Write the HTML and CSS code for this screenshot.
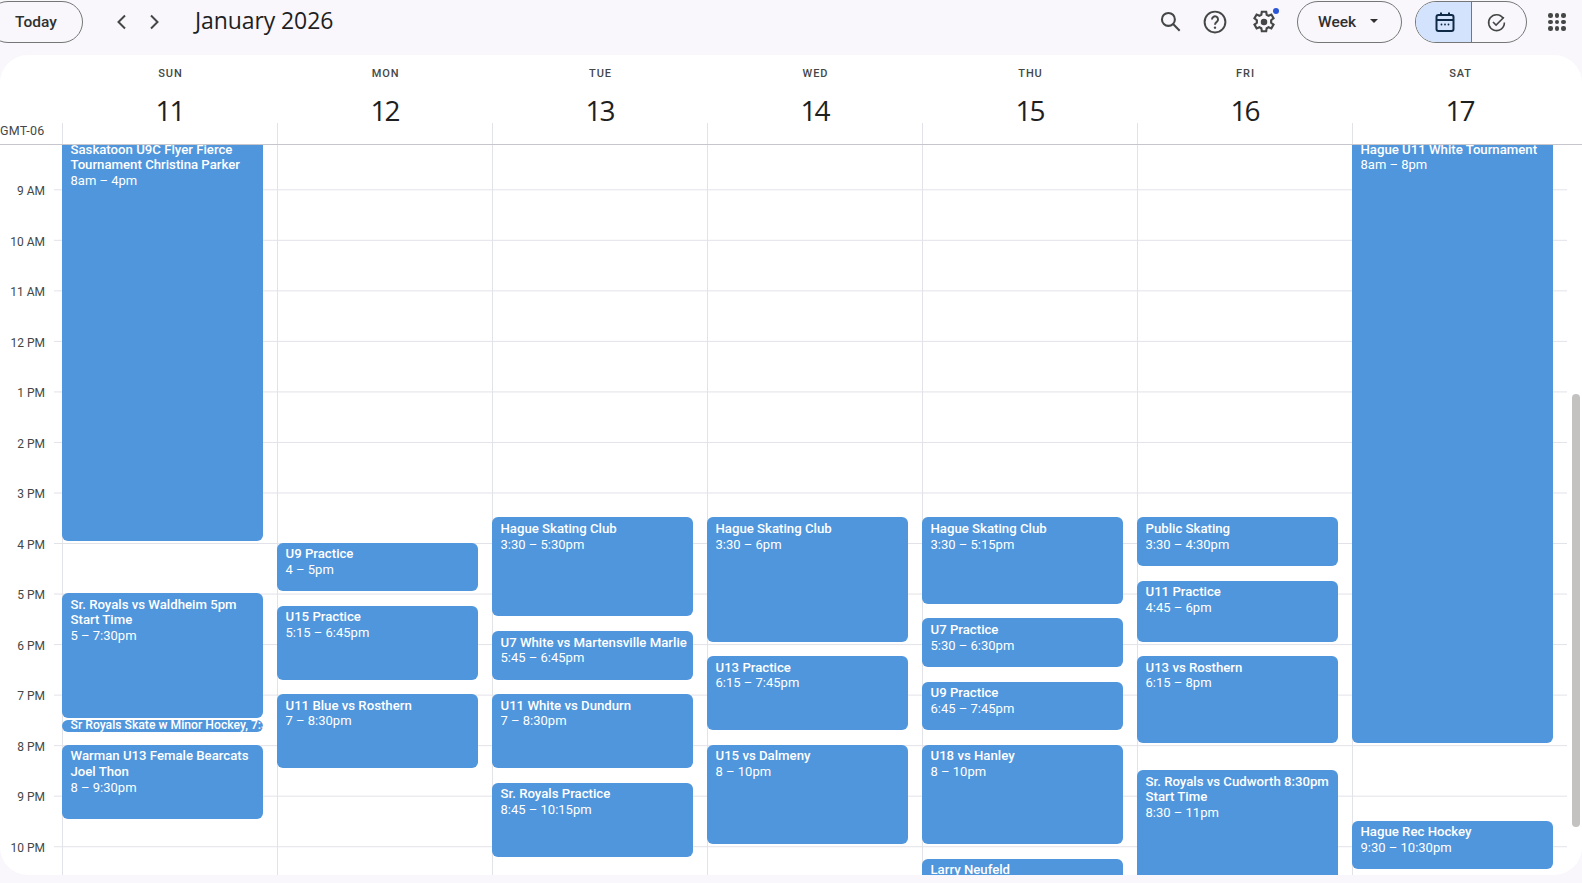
FILE: index.html
```html
<!DOCTYPE html>
<html lang="en">
<head>
<meta charset="UTF-8" />
<title>Calendar - Week of January 11, 2026</title>
<link rel="stylesheet" href="styles.css">
</head>
<body>

<header class="topbar">
  <button class="pill today">Today</button>
  <div class="nav">
    <svg class="nav-icon" viewBox="0 0 24 24"><path d="M15 5.5 8.5 12l6.5 6.5"/></svg>
    <svg class="nav-icon" viewBox="0 0 24 24"><path d="M9 5.5l6.5 6.5L9 18.5"/></svg>
  </div>
  <h1 class="month">January 2026</h1>

  <div class="tools">
    <svg class="tool search" viewBox="0 0 24 24"><circle cx="10" cy="10" r="6.2"/><path d="M14.5 14.5 20.8 20.8"/></svg>
    <svg class="tool help" viewBox="0 0 24 24"><circle cx="12" cy="12" r="9.6"/><path d="M9.2 9.6a2.8 2.8 0 1 1 4.4 2.3c-1 .7-1.6 1.2-1.6 2.6"/><circle class="dot" cx="12" cy="17.2" r="1.1"/></svg>
    <div class="settings">
      <svg class="tool gear" viewBox="0 0 24 24"><path d="M10 2.5h4l.5 2.8 1.7.9 2.6-1.1 2 3.5-2.2 1.7v2.4l2.2 1.7-2 3.5-2.6-1.1-1.7.9-.5 2.8h-4l-.5-2.8-1.7-.9-2.6 1.1-2-3.5 2.2-1.7v-2.4L3.2 8.6l2-3.5 2.6 1.1 1.7-.9z"/><circle class="dot" cx="12" cy="12" r="3"/></svg>
      <span class="badge"></span>
    </div>
    <button class="pill week">Week<span class="caret"></span></button>
    <div class="switch">
      <div class="switch-part active">
        <svg class="tool cal" viewBox="0 0 24 24"><rect x="3.5" y="5" width="17" height="16" rx="2"/><path d="M3.5 10h17M8 2.5V6M16 2.5V6"/><circle class="dot" cx="8.5" cy="14.5" r=".9"/><circle class="dot" cx="12" cy="14.5" r=".9"/><circle class="dot" cx="15.5" cy="14.5" r=".9"/></svg>
      </div>
      <div class="switch-part">
        <svg class="tool check" viewBox="0 0 24 24"><path d="M19.6 7.4A9 9 0 1 0 21 12"/><path d="M8 11.5l3.5 3.5L20.5 6"/></svg>
      </div>
    </div>
    <div class="apps">
      <i></i><i></i><i></i><i></i><i></i><i></i><i></i><i></i><i></i>
    </div>
  </div>
</header>

<main class="card">
  <div class="day-heads">
    <div class="day-head"><span class="dow">SUN</span><span class="dom">11</span></div>
    <div class="day-head"><span class="dow">MON</span><span class="dom">12</span></div>
    <div class="day-head"><span class="dow">TUE</span><span class="dom">13</span></div>
    <div class="day-head"><span class="dow">WED</span><span class="dom">14</span></div>
    <div class="day-head"><span class="dow">THU</span><span class="dom">15</span></div>
    <div class="day-head"><span class="dow">FRI</span><span class="dom">16</span></div>
    <div class="day-head"><span class="dow">SAT</span><span class="dom">17</span></div>
  </div>

  <div class="allday">
    <div class="tz">GMT-06</div>
    <div class="allday-cell"></div><div class="allday-cell"></div><div class="allday-cell"></div>
    <div class="allday-cell"></div><div class="allday-cell"></div><div class="allday-cell"></div>
    <div class="allday-cell"></div>
  </div>

  <div class="grid">
    <div class="hours">
      <div class="hour">9 AM</div>
      <div class="hour">10 AM</div>
      <div class="hour">11 AM</div>
      <div class="hour">12 PM</div>
      <div class="hour">1 PM</div>
      <div class="hour">2 PM</div>
      <div class="hour">3 PM</div>
      <div class="hour">4 PM</div>
      <div class="hour">5 PM</div>
      <div class="hour">6 PM</div>
      <div class="hour">7 PM</div>
      <div class="hour">8 PM</div>
      <div class="hour">9 PM</div>
      <div class="hour">10 PM</div>
    </div>

    <div class="day">
      <div class="event" style="--start:8;--len:8"><b>Saskatoon U9C Flyer Fierce Tournament Christina Parker</b><span>8am – 4pm</span></div>
      <div class="event" style="--start:17;--len:2.5"><b>Sr. Royals vs Waldheim 5pm Start Time</b><span>5 – 7:30pm</span></div>
      <div class="event tiny" style="--start:19.5;--len:0.28"><b>Sr Royals Skate w Minor Hockey, 7:30pm</b></div>
      <div class="event" style="--start:20;--len:1.5"><b>Warman U13 Female Bearcats Joel Thon</b><span>8 – 9:30pm</span></div>
    </div>

    <div class="day">
      <div class="event" style="--start:16;--len:1"><b>U9 Practice</b><span>4 – 5pm</span></div>
      <div class="event" style="--start:17.25;--len:1.5"><b>U15 Practice</b><span>5:15 – 6:45pm</span></div>
      <div class="event" style="--start:19;--len:1.5"><b>U11 Blue vs Rosthern</b><span>7 – 8:30pm</span></div>
    </div>

    <div class="day">
      <div class="event" style="--start:15.5;--len:2"><b>Hague Skating Club</b><span>3:30 – 5:30pm</span></div>
      <div class="event" style="--start:17.75;--len:1"><b class="clip">U7 White vs Martensville Marlie Peters</b><span>5:45 – 6:45pm</span></div>
      <div class="event" style="--start:19;--len:1.5"><b>U11 White vs Dundurn</b><span>7 – 8:30pm</span></div>
      <div class="event" style="--start:20.75;--len:1.5"><b>Sr. Royals Practice</b><span>8:45 – 10:15pm</span></div>
    </div>

    <div class="day">
      <div class="event" style="--start:15.5;--len:2.5"><b>Hague Skating Club</b><span>3:30 – 6pm</span></div>
      <div class="event" style="--start:18.25;--len:1.5"><b>U13 Practice</b><span>6:15 – 7:45pm</span></div>
      <div class="event" style="--start:20;--len:2"><b>U15 vs Dalmeny</b><span>8 – 10pm</span></div>
    </div>

    <div class="day">
      <div class="event" style="--start:15.5;--len:1.75"><b>Hague Skating Club</b><span>3:30 – 5:15pm</span></div>
      <div class="event" style="--start:17.5;--len:1"><b>U7 Practice</b><span>5:30 – 6:30pm</span></div>
      <div class="event" style="--start:18.75;--len:1"><b>U9 Practice</b><span>6:45 – 7:45pm</span></div>
      <div class="event" style="--start:20;--len:2"><b>U18 vs Hanley</b><span>8 – 10pm</span></div>
      <div class="event" style="--start:22.25;--len:1"><b>Larry Neufeld</b><span>10:15 – 11:15pm</span></div>
    </div>

    <div class="day">
      <div class="event" style="--start:15.5;--len:1"><b>Public Skating</b><span>3:30 – 4:30pm</span></div>
      <div class="event" style="--start:16.75;--len:1.25"><b>U11 Practice</b><span>4:45 – 6pm</span></div>
      <div class="event" style="--start:18.25;--len:1.75"><b>U13 vs Rosthern</b><span>6:15 – 8pm</span></div>
      <div class="event" style="--start:20.5;--len:2.5"><b>Sr. Royals vs Cudworth 8:30pm Start Time</b><span>8:30 – 11pm</span></div>
    </div>

    <div class="day">
      <div class="event" style="--start:8;--len:12"><b>Hague U11 White Tournament</b><span>8am – 8pm</span></div>
      <div class="event" style="--start:21.5;--len:1"><b>Hague Rec Hockey</b><span>9:30 – 10:30pm</span></div>
    </div>
  </div>

  <div class="scrollbar"></div>
</main>

</body>
</html>
```

FILE: styles.css
```css
* {
  box-sizing: border-box;
}
:root {
  --hour: 50.54px;
  --first-line: 44.3px;
  --line: #e2e2e9;
}
html, body {
  height: 100%;
}
body {
  margin: 0;
  background: #f9f7fc;
  color: #1f1f1f;
  font-family: Roboto, "Noto Sans", sans-serif;
  overflow: hidden;
}

/* top bar */
.topbar {
  height: 55px;
  display: flex;
  align-items: flex-start;
  padding-top: 1px;
}
.pill {
  height: 42px;
  border: 1px solid #747775;
  border-radius: 21px;
  background: transparent;
  color: #303030;
  font-family: Roboto, sans-serif;
  font-size: 15.5px;
  font-weight: 500;
  padding: 0;
}
.today {
  width: 96px;
  margin-left: -13px;
  padding-left: 2px;
  text-align: center;
}
.nav {
  display: flex;
  gap: 8px;
  margin-left: 27px;
  margin-top: 9px;
}
.nav-icon {
  width: 24px;
  height: 24px;
  fill: none;
  stroke: #444746;
  stroke-width: 2;
}
.month {
  margin: 2px 0 0 29px;
  font-family: "Open Sans", sans-serif;
  font-size: 23px;
  line-height: 34px;
  font-weight: 400;
  color: #1f1f1f;
  letter-spacing: -0.1px;
}
.tools {
  margin-left: auto;
  display: flex;
  align-items: flex-start;
  padding-right: 16px;
}
.tool {
  width: 24px;
  height: 24px;
  fill: none;
  stroke: #444746;
  stroke-width: 2;
  display: block;
}
.tool .dot {
  fill: #444746;
  stroke: none;
}
.search {
  width: 25px;
  height: 25px;
  margin: 8px 19px 0 0;
}
.help {
  width: 26px;
  height: 26px;
  margin: 8px 23px 0 0;
  stroke-width: 1.8;
}
.settings {
  position: relative;
  margin: 8px 20px 0 0;
}
.gear {
  width: 26px;
  height: 26px;
}
.badge {
  position: absolute;
  top: -1px;
  right: -2px;
  width: 6px;
  height: 6px;
  border-radius: 50%;
  background: #2a56d6;
}
.week {
  width: 105px;
  display: flex;
  align-items: center;
  padding-left: 20px;
}
.caret {
  margin-left: 14px;
  border-left: 4px solid transparent;
  border-right: 4px solid transparent;
  border-top: 4px solid #303030;
  margin-top: -2px;
}
.switch {
  width: 112px;
  height: 42px;
  margin-left: 13px;
  display: flex;
  border: 1px solid #747775;
  border-radius: 21px;
  overflow: hidden;
}
.switch-part {
  flex: 1;
  display: flex;
  align-items: center;
  justify-content: center;
}
.switch-part.active {
  flex: 0 0 56px;
  background: #d3e3fd;
  border-right: 1px solid #747775;
}
.cal {
  margin-left: 3px;
  stroke: #0f2a47;
}
.cal .dot {
  fill: #0f2a47;
}
.check {
  width: 21px;
  height: 21px;
  margin-right: 6px;
  stroke-width: 1.8;
}
.apps {
  width: 18px;
  margin: 12px 0 0 21px;
  display: grid;
  grid-template-columns: repeat(3, 4.5px);
  gap: 2.2px;
}
.apps i {
  height: 4.5px;
  border-radius: 50%;
  background: #444746;
}

/* calendar card */
.card {
  height: 820px;
  background: #fff;
  border-radius: 28px;
  overflow: hidden;
  position: relative;
}
.day-heads {
  display: grid;
  grid-template-columns: repeat(7, 215px);
  margin-left: 62px;
  height: 68px;
}
.day-head {
  display: flex;
  flex-direction: column;
  align-items: center;
  padding-left: 2px;
  padding-top: 12px;
}
.dow {
  font-size: 11px;
  line-height: 14px;
  font-weight: 500;
  letter-spacing: 0.9px;
  color: #444746;
}
.dom {
  font-family: "Open Sans", sans-serif;
  font-size: 28px;
  line-height: 36px;
  letter-spacing: -2px;
  margin: 11px 0 0 -2px;
  color: #1f1f1f;
}
.allday {
  display: grid;
  grid-template-columns: 62px repeat(7, 215px);
  height: 22px;
  border-bottom: 1px solid #c6c6cc;
  position: relative;
  z-index: 2;
  background: #fff;
}
.tz {
  font-size: 12.5px;
  line-height: 16px;
  color: #444746;
  letter-spacing: 0.3px;
}
.allday-cell {
  border-left: 1px solid var(--line);
}

/* hour grid */
.grid {
  position: relative;
  display: grid;
  grid-template-columns: 62px repeat(7, 215px);
  height: 730px;
  overflow: hidden;
  width: 1567px;
}
.hours {
  padding-top: 36px;
  background-image: linear-gradient(var(--line) 1px, transparent 1px);
  background-size: 8px var(--hour);
  background-position: right 0 top var(--first-line);
  background-repeat: repeat-y;
}
.hour {
  height: var(--hour);
  padding-right: 17px;
  text-align: right;
  font-size: 12px;
  line-height: 20px;
  color: #444746;
}
.day {
  position: relative;
  border-left: 1px solid var(--line);
  background-image: linear-gradient(var(--line) 1px, transparent 1px);
  background-size: 100% var(--hour);
  background-position: 0 var(--first-line);
}
.event {
  position: absolute;
  left: -1px;
  width: 201px;
  top: calc(var(--first-line) - 0.4px + (var(--start) - 9) * var(--hour));
  height: calc(var(--len) * var(--hour) - 2px);
  padding: 3.4px 6px 0 8.5px;
  background: #4f96dc;
  border-radius: 6px;
  color: #fff;
  font-size: 13px;
  line-height: 15.7px;
  overflow: hidden;
}
.event b {
  display: block;
  font-size: 13.2px;
  font-weight: 500;
}
.event span {
  display: block;
}
.event .clip {
  white-space: nowrap;
  overflow: hidden;
}
.event.tiny {
  padding-top: 0;
  padding-right: 0;
  line-height: 10.5px;
  white-space: nowrap;
}
.event.tiny b {
  font-size: 12.2px;
}
.scrollbar {
  position: absolute;
  left: 1572px;
  top: 339px;
  width: 8px;
  height: 433px;
  background: #c4c1c1;
  border-radius: 4px;
}
```
